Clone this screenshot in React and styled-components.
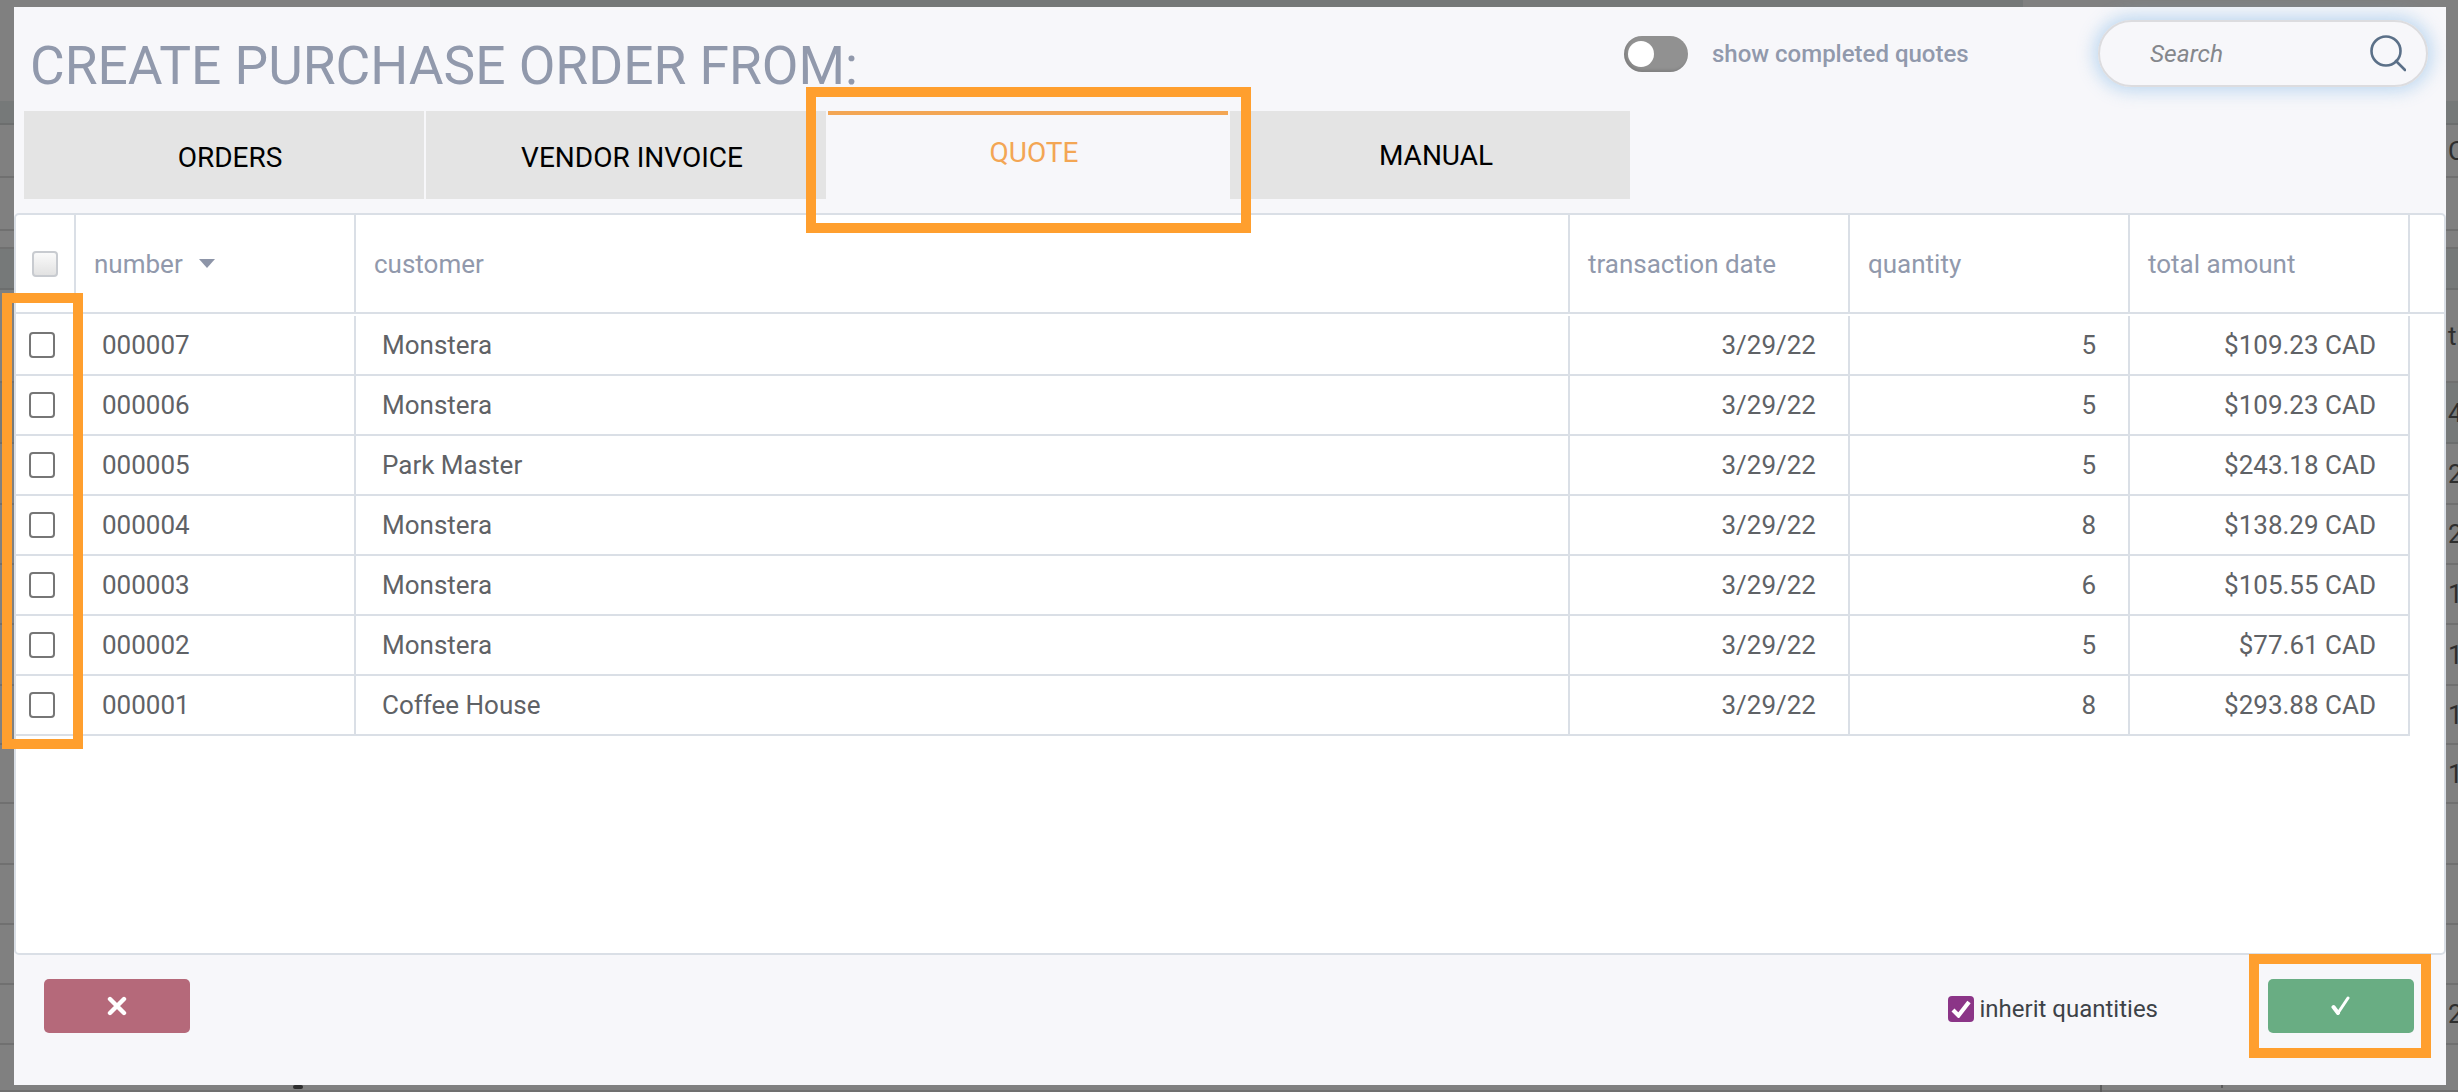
import React from "react";
import styled, { createGlobalStyle } from "styled-components";

const GlobalStyle = createGlobalStyle`
  html, body {
    margin: 0;
    padding: 0;
    background: #808080;
    font-family: Roboto, "Liberation Sans", sans-serif;
  }
`;

const Page = styled.div`
  position: relative;
  width: 2458px;
  height: 1092px;
  overflow: hidden;
`;

/* greyed out page behind the dialog */
const Backdrop = styled.div`
  position: absolute;
  inset: 0;
  display: flex;
  flex-direction: column;
  background: #808080;
`;

const BackRow = styled.div`
  box-sizing: border-box;
  height: ${(p) => p.$h}px;
  display: flex;
  align-items: center;
  justify-content: flex-end;
  background: ${(p) => (p.$dark ? "#767979" : "transparent")};
  border-bottom: 2px solid ${(p) => (p.$dark ? "#6c6e6e" : "#707070")};
  color: #2e2e2e;
  font-size: 26px;
`;

const BackText = styled.span`
  width: 10px;
  white-space: nowrap;
  overflow: visible;
`;

const TopRow = styled.div`
  height: 101px;
  display: grid;
  grid-template-columns: 430px 1593px 1fr;
`;

const TopCell = styled.div`
  background: ${(p) => (p.$dark ? "#757878" : "#808080")};
`;

const Stray = styled.span`
  position: absolute;
  left: ${(p) => p.$x}px;
  top: ${(p) => p.$y}px;
  width: ${(p) => p.$w}px;
  height: ${(p) => p.$h}px;
  background: ${(p) => p.$c};
  border-radius: ${(p) => p.$r || 0}px;
`;

const Modal = styled.div`
  position: absolute;
  left: 14px;
  top: 7px;
  width: 2432px;
  height: 1078px;
  display: flex;
  flex-direction: column;
  background: #f7f7fa;
`;

const TitleRow = styled.div`
  height: 104px;
  display: flex;
  justify-content: space-between;
`;

const Title = styled.h1`
  margin: 0;
  padding: 29px 0 0 16px;
  font-size: 53.3px;
  line-height: 60px;
  font-weight: 400;
  color: #9199ac;
  white-space: nowrap;
`;

const Tools = styled.div`
  display: flex;
  align-items: flex-start;
`;

const Toggle = styled.div`
  box-sizing: border-box;
  width: 64px;
  height: 36px;
  margin-top: 29px;
  padding: 5px 4px;
  border-radius: 18px;
  background: #919191;
  box-shadow: inset 2px -2px 3px rgba(0, 0, 0, 0.12);
`;

const Knob = styled.div`
  width: 26px;
  height: 26px;
  border-radius: 50%;
  background: #fff;
`;

const ToggleLabel = styled.span`
  margin: 31px 0 0 24px;
  width: 386px;
  font-size: 24px;
  line-height: 32px;
  font-weight: 500;
  color: #9199ac;
`;

const SearchBox = styled.div`
  box-sizing: border-box;
  width: 330px;
  height: 67px;
  margin: 13px 18px 0 0;
  padding: 0 20px 0 50px;
  display: flex;
  align-items: center;
  justify-content: space-between;
  border: 2px solid #dcdcdf;
  border-radius: 34px;
  box-shadow: 0 0 16px 5px rgba(130, 185, 230, 0.45);
`;

const SearchText = styled.span`
  font-size: 24.5px;
  font-style: italic;
  color: #85878c;
`;

const Tabs = styled.div`
  height: 88px;
  margin: 0 0 14px 10px;
  display: flex;
  gap: 2px;
`;

const Tab = styled.div`
  box-sizing: border-box;
  width: 400px;
  display: flex;
  align-items: center;
  justify-content: center;
  padding-left: 12px;
  padding-bottom: ${(p) => (p.$active ? 9 : p.$up || 0)}px;
  font-size: 28px;
  background: ${(p) => (p.$active ? "transparent" : "#e4e4e4")};
  color: ${(p) => (p.$active ? "#f3a654" : "#000")};
  border-top: 4px solid ${(p) => (p.$active ? "#f3a654" : "#e4e4e4")};
`;

const Panel = styled.div`
  flex: 1;
  box-sizing: border-box;
  background: #fff;
  border: 2px solid #dadfe6;
  border-radius: 5px;
`;

const Columns = `
  display: grid;
  grid-template-columns: 60px 280px 1214px 280px 280px 280px;
`;

const HeadRow = styled.div`
  ${Columns}
  grid-template-columns: 60px 280px 1214px 280px 280px 280px 1fr;
  height: 99px;
  box-sizing: border-box;
  border-bottom: 2px solid #dadfe6;
`;

const HeadCell = styled.div`
  display: flex;
  align-items: center;
  gap: 16px;
  padding-left: ${(p) => p.$pad ?? 18}px;
  font-size: 26px;
  color: #9199ac;
  border-right: 2px solid #dadfe6;
`;

const Caret = styled.span`
  width: 0;
  height: 0;
  border-left: 8px solid transparent;
  border-right: 8px solid transparent;
  border-top: 9px solid #8d95a8;
`;

const HeadCheck = styled.input.attrs({ type: "checkbox" })`
  appearance: none;
  box-sizing: border-box;
  width: 26px;
  height: 26px;
  margin: 0;
  border: 2px solid #c8cbd0;
  border-radius: 4px;
  background: linear-gradient(#fafafa, #e2e2e2);
`;

const Body = styled.div`
  margin-top: 2px;
`;

const Row = styled.div`
  ${Columns}
  height: 60px;
  box-sizing: border-box;
  border-bottom: 2px solid #dadfe6;
  width: 2394px;
`;

const Cell = styled.div`
  display: flex;
  align-items: center;
  justify-content: ${(p) => (p.$right ? "flex-end" : "flex-start")};
  padding: ${(p) => (p.$right ? "0 32px 0 0" : "0 0 0 26px")};
  font-size: 26px;
  color: #5f6266;
  border-right: 2px solid #dadfe6;
`;

const CheckCell = styled.div`
  display: flex;
  align-items: center;
  padding-left: 13px;
`;

const RowCheck = styled.input.attrs({ type: "checkbox" })`
  appearance: none;
  box-sizing: border-box;
  width: 26px;
  height: 26px;
  margin: 0;
  border: 2px solid #767676;
  border-radius: 4px;
  background: #fff;
`;

const Footer = styled.div`
  height: 130px;
  box-sizing: border-box;
  padding: 24px 32px 0 30px;
  display: flex;
  align-items: flex-start;
  justify-content: space-between;
`;

const ActionButton = styled.button`
  width: 146px;
  height: 54px;
  padding: 0;
  display: flex;
  align-items: center;
  justify-content: center;
  border: none;
  border-radius: 5px;
  background: ${(p) => p.$bg};
`;

const FooterRight = styled.div`
  display: flex;
  align-items: flex-start;
  gap: 110px;
`;

const Inherit = styled.label`
  margin-top: 17px;
  display: flex;
  align-items: center;
  gap: 6px;
  font-size: 24px;
  line-height: 26px;
  color: #3d4247;
`;

const PurpleCheck = styled.span`
  width: 26px;
  height: 26px;
  display: flex;
  align-items: center;
  justify-content: center;
  border-radius: 4px;
  background: #8b3587;
`;

/* orange marks drawn over the screenshot */
const Mark = styled.div`
  position: absolute;
  box-sizing: border-box;
  left: ${(p) => p.$x}px;
  top: ${(p) => p.$y}px;
  width: ${(p) => p.$w}px;
  height: ${(p) => p.$h}px;
  border: 10px solid #ff9f2e;
  pointer-events: none;
`;

const backRows = [
  { h: 24, dark: true },
  { h: 53, text: "C" },
  { h: 53 },
  { h: 18 },
  { h: 41, dark: true },
  { h: 93, text: "ti" },
  { h: 61, text: "4", dark: true },
  { h: 61, text: "2" },
  { h: 60, text: "2" },
  { h: 60, text: "1" },
  { h: 61, text: "1" },
  { h: 59, text: "1" },
  { h: 59, text: "1" },
  { h: 61 },
  { h: 60 },
  { h: 60, text: "" },
  { h: 60, text: "2" },
  { h: 47 },
];

const quotes = [
  ["000007", "Monstera", "5", "$109.23 CAD"],
  ["000006", "Monstera", "5", "$109.23 CAD"],
  ["000005", "Park Master", "5", "$243.18 CAD"],
  ["000004", "Monstera", "8", "$138.29 CAD"],
  ["000003", "Monstera", "6", "$105.55 CAD"],
  ["000002", "Monstera", "5", "$77.61 CAD"],
  ["000001", "Coffee House", "8", "$293.88 CAD"],
];

export default function App() {
  return (
    <Page>
      <GlobalStyle />
      <Backdrop>
        <TopRow>
          <TopCell />
          <TopCell $dark />
          <TopCell />
        </TopRow>
        {backRows.map((r, i) => (
          <BackRow key={i} $h={r.h} $dark={r.dark}>
            {r.text && <BackText>{r.text}</BackText>}
          </BackRow>
        ))}
        <Stray $x={2100} $y={1085} $w={2} $h={7} $c="#5c5c5c" />
        <Stray $x={2221} $y={1085} $w={2} $h={3} $c="#5c5c5c" />
        <Stray $x={293} $y={1085} $w={10} $h={4} $r={3} $c="#2e2e2e" />
      </Backdrop>

      <Modal>
        <TitleRow>
          <Title>CREATE PURCHASE ORDER FROM:</Title>
          <Tools>
            <Toggle>
              <Knob />
            </Toggle>
            <ToggleLabel>show completed quotes</ToggleLabel>
            <SearchBox>
              <SearchText>Search</SearchText>
              <svg width="36" height="40" viewBox="0 0 36 40" fill="none" stroke="#5b7088" strokeWidth="2.6" strokeLinecap="round">
                <circle cx="16" cy="17" r="14.5" />
                <path d="M26 27 L35 36" />
              </svg>
            </SearchBox>
          </Tools>
        </TitleRow>

        <Tabs>
          <Tab>ORDERS</Tab>
          <Tab>VENDOR INVOICE</Tab>
          <Tab $active>QUOTE</Tab>
          <Tab $up={4}>MANUAL</Tab>
        </Tabs>

        <Panel>
          <HeadRow>
            <HeadCell $pad={16}>
              <HeadCheck readOnly />
            </HeadCell>
            <HeadCell>
              number <Caret />
            </HeadCell>
            <HeadCell>customer</HeadCell>
            <HeadCell>transaction date</HeadCell>
            <HeadCell>quantity</HeadCell>
            <HeadCell>total amount</HeadCell>
            <div />
          </HeadRow>
          <Body>
            {quotes.map((q) => (
              <Row key={q[0]}>
                <CheckCell>
                  <RowCheck readOnly />
                </CheckCell>
                <Cell>{q[0]}</Cell>
                <Cell>{q[1]}</Cell>
                <Cell $right>3/29/22</Cell>
                <Cell $right>{q[2]}</Cell>
                <Cell $right>{q[3]}</Cell>
              </Row>
            ))}
          </Body>
        </Panel>

        <Footer>
          <ActionButton $bg="#b5697a" aria-label="cancel">
            <svg width="20" height="20" viewBox="0 0 20 20" stroke="#fff" strokeWidth="4.4" strokeLinecap="round">
              <path d="M3 3 L17 17 M17 3 L3 17" />
            </svg>
          </ActionButton>
          <FooterRight>
            <Inherit>
              <PurpleCheck>
                <svg width="20" height="18" viewBox="0 0 20 18" fill="none" stroke="#fff" strokeWidth="4.2">
                  <path d="M2 10 L7.5 15.5 L18 2" />
                </svg>
              </PurpleCheck>
              inherit quantities
            </Inherit>
            <ActionButton $bg="#69ad83" aria-label="confirm">
              <svg width="20" height="20" viewBox="0 0 20 20" fill="none" stroke="#fff" strokeLinecap="round">
                <path d="M2.5 11 L7 17" strokeWidth="4" />
                <path d="M7 17 L17 2" strokeWidth="3" />
              </svg>
            </ActionButton>
          </FooterRight>
        </Footer>
      </Modal>

      <Mark $x={806} $y={87} $w={445} $h={146} />
      <Mark $x={2} $y={293} $w={81} $h={456} />
      <Mark $x={2249} $y={954} $w={182} $h={104} />
    </Page>
  );
}
